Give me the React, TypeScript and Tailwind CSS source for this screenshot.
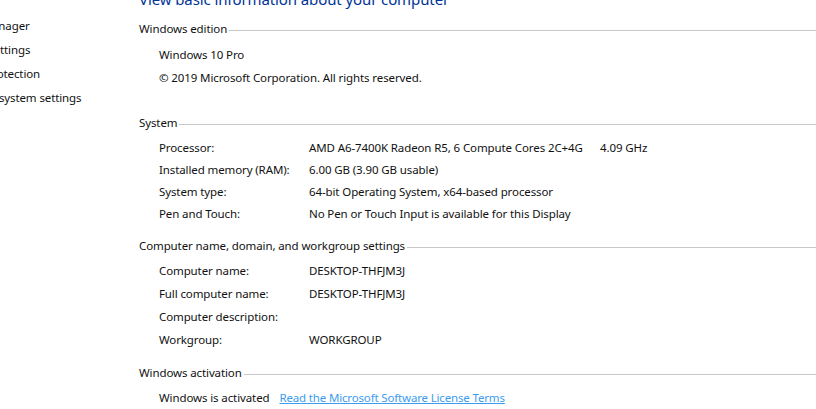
const sidebarLinks = ["Device Manager", "Remote settings", "System protection", "Advanced system settings"];

function Heading({ title, className }: { title: string; className: string }) {
  return (
    <div className={"flex items-center gap-[2px] h-[18px] " + className}>
      <span className="whitespace-nowrap">{title}</span>
      <div className="flex-1 h-px bg-[#c8c8c8] mt-[2px]" />
    </div>
  );
}

function Row({ label, value, className }: { label: string; value?: string; className: string }) {
  return (
    <div className={"flex h-[18px] pl-[20px] " + className}>
      <span className="w-[150px] shrink-0 whitespace-nowrap">{label}</span>
      <span className="whitespace-pre">{value}</span>
    </div>
  );
}

export default function App() {
  return (
    <div className="flex w-[816px] h-[409px] overflow-hidden bg-white text-[11.5px] tracking-[-0.11px] leading-[18px] text-[#111111] font-['Noto_Sans',sans-serif]">
      <div className="w-[139px] shrink-0 pt-[17px] -ml-[56px] flex flex-col gap-[6px]">
        {sidebarLinks.map((link) => (
          <div key={link} className="h-[18px] whitespace-nowrap">{link}</div>
        ))}
      </div>
      <div className="flex-1 ml-[56px] -mt-[12px]">
        <div className="h-[22px] text-[15px] tracking-[-0.1px] leading-[22px] text-[#003399] whitespace-nowrap">View basic information about your computer</div>
        <Heading title="Windows edition" className="mt-[10px]" />
        <Row label="Windows 10 Pro" className="mt-[8px]" />
        <Row label="© 2019 Microsoft Corporation. All rights reserved." className="mt-[5px]" />
        <Heading title="System" className="mt-[27px]" />
        <Row label="Processor:" value="AMD A6-7400K Radeon R5, 6 Compute Cores 2C+4G      4.09 GHz" className="mt-[7px]" />
        <Row label="Installed memory (RAM):" value="6.00 GB (3.90 GB usable)" className="mt-[4px]" />
        <Row label="System type:" value="64-bit Operating System, x64-based processor" className="mt-[4px]" />
        <Row label="Pen and Touch:" value="No Pen or Touch Input is available for this Display" className="mt-[4px]" />
        <Heading title="Computer name, domain, and workgroup settings" className="mt-[14px]" />
        <Row label="Computer name:" value="DESKTOP-THFJM3J" className="mt-[7px]" />
        <Row label="Full computer name:" value="DESKTOP-THFJM3J" className="mt-[5px]" />
        <Row label="Computer description:" className="mt-[5px]" />
        <Row label="Workgroup:" value="WORKGROUP" className="mt-[5px]" />
        <Heading title="Windows activation" className="mt-[15px]" />
        <div className="flex h-[18px] pl-[20px] mt-[7px] gap-[10px]">
          <span className="whitespace-nowrap">Windows is activated</span>
          <a className="whitespace-nowrap text-[#3b9cf0] underline tracking-[-0.16px]">Read the Microsoft Software License Terms</a>
        </div>
      </div>
    </div>
  );
}
